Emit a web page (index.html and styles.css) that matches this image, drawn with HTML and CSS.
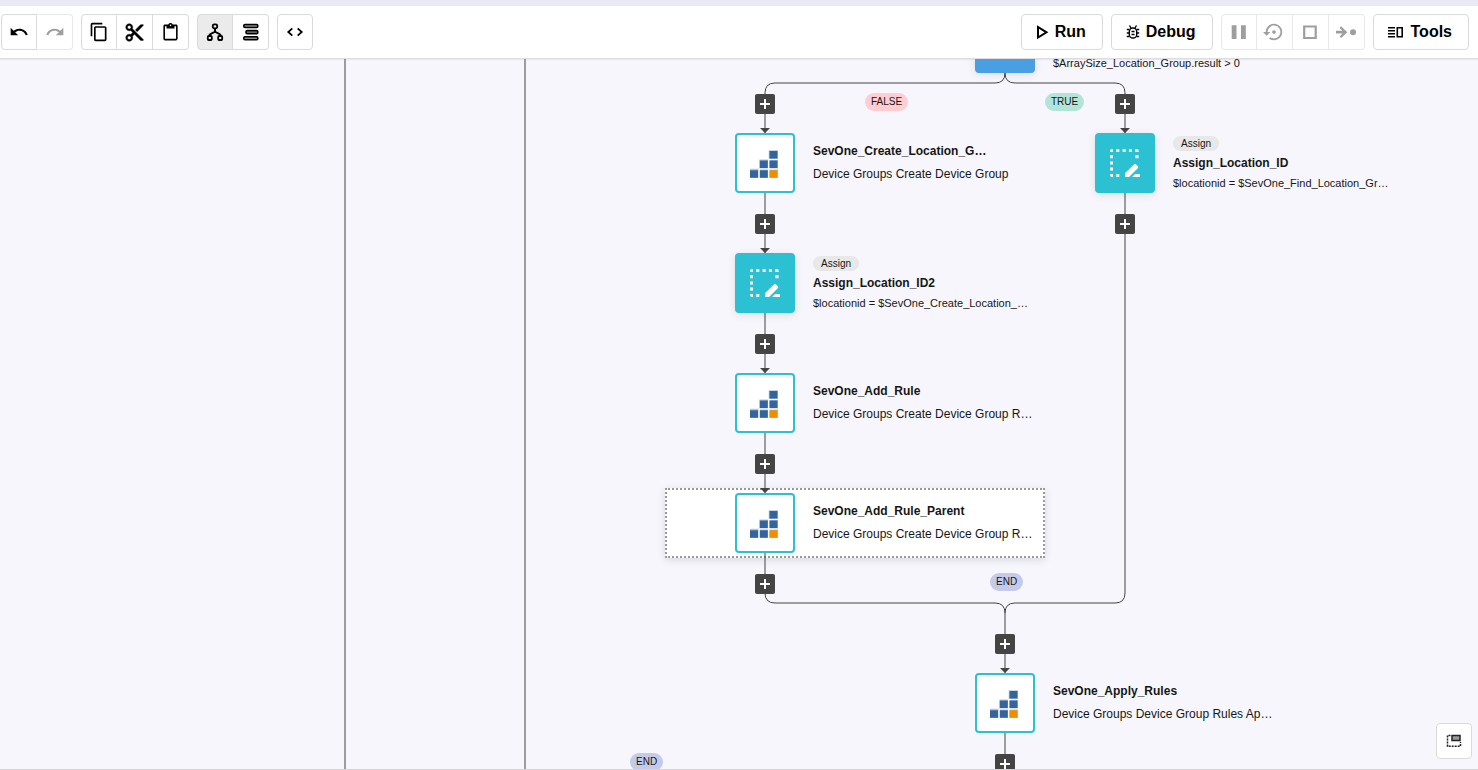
FILE: index.html
```html
<!DOCTYPE html>
<html lang="en">
<head>
<meta charset="utf-8">
<title>Workflow editor</title>
<link rel="stylesheet" href="styles.css">
</head>
<body>
<svg class="defs" aria-hidden="true">
  <symbol id="sevone" viewBox="0.500 -1 30 30">
    <path fill="#b9c7dc" d="M19.2 1.2h9.3v28h-28v-9.4h9.4v-9.4h9.3z"/>
    <path fill="#fff" d="M9 19.5h1.4v10H9zM18.6 10h1.4v19.500h-1.400zM19 9.900h10v1.200h-10zM9.500 19.400h20v1.200h-20z"/>
    <path fill="#33649b" d="M20 2h8v7.500h-8zM10.300 11.500h8v7.500h-8zM20 11.500h8v7.500h-8zM.500 21.200h8v7.500h-8zM10.300 21.200h8v7.500h-8z"/>
    <path fill="#f08c00" d="M20 21.200h8v7.500h-8z"/>
  </symbol>
  <symbol id="assign" viewBox="0 0 30 30">
    <path fill="#fff" d="M2 1h1v3H0V3a2 2 0 0 1 2-2zM6.300 1h3v3h-3zM12.600 1h3v3h-3zM18.900 1h3v3h-3zM25.200 1h1.500a2 2 0 0 1 2 2v1h-3.500zM25.400 7.200h3.200v3h-3.200zM0 7.200h3v3H0zM0 13.400h3v3H0zM0 19.600h3v3H0zM0 26h3v3H2a2 2 0 0 1-2-2zM6.300 26h3v3h-3z"/>
    <path fill="#fff" d="M15 25.200 24.200 16.200q.800-.700 1.600 0l2.200 2.200q.700.800 0 1.600L19 29h-4zM25 26h5v3h-8z"/>
  </symbol>
  <symbol id="plus" viewBox="0 0 20 20">
    <path fill="#fff" d="M9 5h2v4h4v2h-4v4H9v-4H5V9h4z"/>
  </symbol>
</svg>

<div class="app">
  <header class="toolbar">
    <div class="group">
      <button class="tool" aria-label="Undo"><svg width="20" height="20" viewBox="0 0 24 24"><path d="M12.500 8c-2.650 0-5.050.990-6.900 2.600L2 7v9h9l-3.620-3.620c1.390-1.160 3.160-1.880 5.120-1.880 3.540 0 6.550 2.310 7.600 5.500l2.370-.780C21.080 11.030 17.150 8 12.500 8z"/></svg></button>
      <button class="tool" aria-label="Redo" disabled><svg width="20" height="20" viewBox="0 0 24 24"><path d="M18.400 10.600C16.550 8.990 14.150 8 11.500 8c-4.650 0-8.580 3.030-9.960 7.220L3.900 16c1.050-3.190 4.050-5.500 7.600-5.500 1.950 0 3.730.720 5.120 1.880L13 16h9V7l-3.600 3.600z"/></svg></button>
    </div>
    <div class="group">
      <button class="tool" aria-label="Copy"><svg width="20" height="20" viewBox="0 0 24 24"><path d="M16 1H4c-1.100 0-2 .9-2 2v14h2V3h12V1zm3 4H8c-1.100 0-2 .9-2 2v14c0 1.100.9 2 2 2h11c1.100 0 2-.9 2-2V7c0-1.100-.9-2-2-2zm0 16H8V7h11v14z"/></svg></button>
      <button class="tool" aria-label="Cut"><svg width="21" height="21" viewBox="0 0 24 24"><path stroke="#000" stroke-width=".5" d="M9.640 7.640c.230-.500.360-1.050.360-1.640 0-2.210-1.790-4-4-4S2 3.790 2 6s1.790 4 4 4c.590 0 1.140-.130 1.640-.360L10 12l-2.360 2.360C7.140 14.130 6.590 14 6 14c-2.210 0-4 1.790-4 4s1.790 4 4 4 4-1.790 4-4c0-.590-.130-1.140-.360-1.640L12 14l7 7h3v-1L9.640 7.640zM6 8c-1.100 0-2-.890-2-2s.9-2 2-2 2 .890 2 2-.9 2-2 2zm0 12c-1.100 0-2-.890-2-2s.9-2 2-2 2 .890 2 2-.9 2-2 2zM19 3l-6 6 2 2 7-7V3z"/></svg></button>
      <button class="tool" aria-label="Paste"><svg width="19" height="19" viewBox="0 0 24 24"><path d="M19 2h-4.180C14.400.840 13.300 0 12 0S9.600.840 9.180 2H5c-1.100 0-2 .9-2 2v16c0 1.100.9 2 2 2h14c1.100 0 2-.9 2-2V4c0-1.100-.9-2-2-2zm-7 0c.550 0 1 .450 1 1s-.450 1-1 1-1-.450-1-1 .450-1 1-1zm7 18H5V4h2v3h10V4h2v16z"/></svg></button>
    </div>
    <div class="group">
      <button class="tool on" aria-label="Tree layout"><svg width="20" height="20" viewBox="0 0 20 20"><g fill="none" stroke="#000" stroke-width="1.800"><rect x="7.800" y="2.300" width="4.400" height="4" rx="1.500"/><rect x="2.800" y="14" width="4" height="4" rx="1"/><rect x="13.200" y="14" width="4" height="4" rx="1"/><path d="M10 6.300V10M4.800 14v-1.500L10 9.600l5.200 2.900V14" stroke-width="2"/></g></svg></button>
      <button class="tool" aria-label="List layout"><svg width="20" height="20" viewBox="0 0 20 20"><g fill="#888" stroke="#000" stroke-width="1.600"><rect x="2.800" y="2.500" width="14" height="3" rx="1.200"/><rect x="5" y="8.600" width="11.800" height="3" rx="1.200"/><rect x="2.800" y="14.700" width="14" height="3" rx="1.200"/></g></svg></button>
    </div>
    <div class="group">
      <button class="tool" aria-label="Code view"><svg width="20" height="20" viewBox="0 0 20 20"><path d="M7.300 6.300 3.300 10l4 3.700M12.700 6.300l4 3.700-4 3.700" fill="none" stroke="#000" stroke-width="1.800"/></svg></button>
    </div>

    <div class="group push">
      <button class="tool wide"><svg width="13" height="16" viewBox="0 0 13 16"><path d="M2 3v10.500l8.500-5.200z" fill="none" stroke="#000" stroke-width="2"/></svg>Run</button>
    </div>
    <div class="group">
      <button class="tool wide"><svg width="14" height="16" viewBox="0 0 14 16"><g fill="none" stroke="#000" stroke-width="1.400"><rect x="3.300" y="4" width="7.400" height="10" rx="3.600"/><path d="M5 4 3.500 1.500M9 4l1.500-2.500M.800 5.500H3.300M.800 9H3.300M.800 12.500H3.300M10.700 5.500h2.500M10.700 9h2.500M10.700 12.500h2.500M5.500 7.500h3M5.500 10.500h3"/></g></svg>Debug</button>
    </div>
    <div class="group">
      <button class="tool" aria-label="Pause" disabled><svg width="20" height="20" viewBox="0 0 20 20"><path d="M2.700 3.300h4.800v13.700H2.700zM12 3.300h4.800v13.700H12z"/></svg></button>
      <button class="tool" aria-label="Restart" disabled><svg width="22" height="22" viewBox="0 0 24 24"><path d="M14 12c0-1.100-.9-2-2-2s-2 .9-2 2 .9 2 2 2 2-.9 2-2zm-2-9c-4.970 0-9 4.030-9 9H0l4 4 4-4H5c0-3.870 3.130-7 7-7s7 3.130 7 7-3.130 7-7 7c-1.510 0-2.910-.490-4.060-1.300l-1.420 1.440C8.040 20.300 9.940 21 12 21c4.970 0 9-4.030 9-9s-4.030-9-9-9z"/></svg></button>
      <button class="tool" aria-label="Stop" disabled><svg width="20" height="20" viewBox="0 0 20 20"><path d="M4.200 4.500h11.500v11.500H4.200z" fill="none" stroke="#9e9e9e" stroke-width="2.200"/></svg></button>
      <button class="tool" aria-label="Step" disabled><svg width="22" height="20" viewBox="0 0 22 20"><path d="M1 8.800h6.500L4.600 5.900 6.100 4.300 12.300 10.200 6.100 16l-1.500-1.600L7.500 11.500H1z"/><circle cx="18" cy="10.200" r="3"/></svg></button>
    </div>
    <div class="group">
      <button class="tool wide"><svg width="17" height="16" viewBox="0 0 17 16"><path d="M0 3h7v1.500H0zM0 6h7v1.500H0zM0 9h7v1.500H0zM0 12h7v1.500H0z"/><path d="M9.300 3.800h4.900v8.900H9.300z" fill="none" stroke="#000" stroke-width="1.600"/></svg>Tools</button>
    </div>
  </header>

  <main class="canvas">
    <div class="selection"></div>

    <svg class="wires" aria-hidden="true">
      <g fill="none" stroke="#444">
        <path d="M345 0V720M525 0V720"/>
        <path d="M1005 14q0 10-10 10H775q-10 0-10 10V134M1005 14q0 10 10 10h100q10 0 10 10V134"/>
        <path d="M765 134V534q0 10 10 10H995q10 0 10 10V720"/>
        <path d="M1125 134V534q0 10-10 10H1015q-10 0-10 10"/>
      </g>
      <path fill="#444" d="M760 69h10l-5 5zM1120 69h10l-5 5zM760 189h10l-5 5zM760 309h10l-5 5zM760 429h10l-5 5zM1000 609h10l-5 5z"/>
    </svg>

    <div class="node decision" style="left:975px;top:-46px"></div>
    <span class="condition" style="left:1053px;top:0">$ArraySize_Location_Group.result &gt; 0</span>

    <span class="pill false" style="left:865px;top:34px">FALSE</span>
    <span class="pill true" style="left:1045px;top:34px">TRUE</span>
    <span class="pill end" style="left:990px;top:514px">END</span>
    <span class="pill end" style="left:630px;top:694px">END</span>

    <button class="add" aria-label="Add step" style="left:755px;top:35px"><svg><use href="#plus"/></svg></button>
    <button class="add" aria-label="Add step" style="left:1115px;top:35px"><svg><use href="#plus"/></svg></button>
    <button class="add" aria-label="Add step" style="left:755px;top:155px"><svg><use href="#plus"/></svg></button>
    <button class="add" aria-label="Add step" style="left:1115px;top:155px"><svg><use href="#plus"/></svg></button>
    <button class="add" aria-label="Add step" style="left:755px;top:275px"><svg><use href="#plus"/></svg></button>
    <button class="add" aria-label="Add step" style="left:755px;top:395px"><svg><use href="#plus"/></svg></button>
    <button class="add" aria-label="Add step" style="left:755px;top:515px"><svg><use href="#plus"/></svg></button>
    <button class="add" aria-label="Add step" style="left:995px;top:575px"><svg><use href="#plus"/></svg></button>
    <button class="add" aria-label="Add step" style="left:995px;top:695px"><svg><use href="#plus"/></svg></button>

    <div class="node action" style="left:735px;top:74px"><svg><use href="#sevone"/></svg></div>
    <div class="info" style="left:813px;top:74px">
      <strong class="name">SevOne_Create_Location_G…</strong>
      <span class="desc">Device Groups Create Device Group</span>
    </div>

    <div class="node assign" style="left:1095px;top:74px"><svg><use href="#assign"/></svg></div>
    <div class="info tagged" style="left:1173px;top:74px">
      <span class="tag">Assign</span>
      <strong class="name">Assign_Location_ID</strong>
      <span class="expr">$locationid = $SevOne_Find_Location_Gr…</span>
    </div>

    <div class="node assign" style="left:735px;top:194px"><svg><use href="#assign"/></svg></div>
    <div class="info tagged" style="left:813px;top:194px">
      <span class="tag">Assign</span>
      <strong class="name">Assign_Location_ID2</strong>
      <span class="expr">$locationid = $SevOne_Create_Location_…</span>
    </div>

    <div class="node action" style="left:735px;top:314px"><svg><use href="#sevone"/></svg></div>
    <div class="info" style="left:813px;top:314px">
      <strong class="name">SevOne_Add_Rule</strong>
      <span class="desc">Device Groups Create Device Group R…</span>
    </div>

    <div class="node action" style="left:735px;top:434px"><svg><use href="#sevone"/></svg></div>
    <div class="info" style="left:813px;top:434px">
      <strong class="name">SevOne_Add_Rule_Parent</strong>
      <span class="desc">Device Groups Create Device Group R…</span>
    </div>

    <div class="node action" style="left:975px;top:614px"><svg><use href="#sevone"/></svg></div>
    <div class="info" style="left:1053px;top:614px">
      <strong class="name">SevOne_Apply_Rules</strong>
      <span class="desc">Device Groups Device Group Rules Ap…</span>
    </div>

    <button class="tool minimap" aria-label="Toggle minimap"><svg width="16" height="16" viewBox="0 0 16 16"><path d="M6 2.500h8v5H6z" fill="#999" stroke="#222" stroke-width="1.500"/><path d="M4.500 2.500H1.500v10.800h13V9" fill="none" stroke="#222" stroke-width="1.500" stroke-dasharray="2 1"/></svg></button>
  </main>
</div>
</body>
</html>
```
FILE: styles.css
```css
* {
  box-sizing: border-box;
}

body {
  margin: 0;
  font-family: "Liberation Sans", Arial, sans-serif;
  font-size: 12px;
  color: #161616;
}

.defs {
  position: absolute;
  width: 0;
  height: 0;
}

.app {
  display: flex;
  flex-direction: column;
  height: 100vh;
  border-top: 6px solid #e8eaf6;
  background: #f6f6fc;
}

/* Toolbar */

.toolbar {
  display: flex;
  gap: 8px;
  padding: 8px 9px 8px 1px;
  background: #fff;
  border-bottom: 1px solid #dedee2;
  box-shadow: 0 1px 1px rgba(0, 0, 0, 0.06);
}

.group {
  display: flex;
}

.push {
  margin-left: auto;
}

.tool {
  display: flex;
  align-items: center;
  justify-content: center;
  width: 36px;
  height: 36px;
  padding: 0;
  border: 1px solid #dadada;
  background: #fff;
  color: #000;
  font: bold 16px "Liberation Sans", Arial, sans-serif;
}

.tool svg {
  flex: none;
}

.tool + .tool {
  border-left-width: 0;
}

.tool:first-child {
  border-top-left-radius: 4px;
  border-bottom-left-radius: 4px;
}

.tool:last-child {
  border-top-right-radius: 4px;
  border-bottom-right-radius: 4px;
}

.tool:disabled {
  border-color: #e8e8e8;
}

.tool:disabled svg {
  fill: #9e9e9e;
}

.tool.on {
  background: #ebebeb;
}

.tool.wide {
  width: auto;
  gap: 6px;
  padding: 0 16px 0 14px;
}

/* Canvas */

.canvas {
  position: relative;
  flex: 1;
  overflow: hidden;
  border-bottom: 1px solid #d5d5d9;
}

.wires {
  position: absolute;
  inset: 0;
  width: 100%;
  height: 100%;
}

.selection {
  position: absolute;
  left: 665px;
  top: 429px;
  width: 380px;
  height: 70px;
  border: 2px dotted #999;
  background: #fff;
  box-shadow: 0 2px 8px rgba(0, 0, 0, 0.12);
}

.node {
  position: absolute;
  display: grid;
  place-items: center;
  width: 60px;
  height: 60px;
  border-radius: 4px;
  box-shadow: 0 2px 8px rgba(0, 0, 0, 0.1);
}

.node svg {
  width: 30px;
  height: 30px;
}

.decision {
  background: #4a9fe3;
}

.assign {
  background: #2bc1d3;
}

.action {
  border: 2px solid #2bc1d3;
  background: #fff;
  box-shadow: none;
}

.info {
  position: absolute;
  display: flex;
  flex-direction: column;
  align-items: flex-start;
  height: 60px;
  padding-top: 10px;
  white-space: nowrap;
}

.info.tagged {
  padding-top: 3px;
}

.name {
  line-height: 16px;
}

.desc {
  margin-top: 7px;
  line-height: 16px;
}

.expr {
  margin-top: 6px;
  font-size: 11px;
  line-height: 13px;
}

.condition {
  position: absolute;
  font-size: 11px;
  line-height: 8px;
  white-space: nowrap;
}

.tag {
  margin-bottom: 4px;
  padding: 0 8px;
  border-radius: 8px;
  background: #e8e8e8;
  font-size: 10px;
  line-height: 15px;
}

.pill {
  position: absolute;
  padding: 0 6px;
  border-radius: 9px;
  font-size: 10px;
  line-height: 18px;
}

.false {
  background: #ffcdd2;
}

.true {
  background: #b2e5d8;
}

.end {
  background: #c5cae9;
}

.add {
  position: absolute;
  width: 20px;
  height: 20px;
  padding: 0;
  border: 0;
  border-radius: 2px;
  background: #444;
}

.add svg {
  display: block;
  width: 20px;
  height: 20px;
}

.minimap {
  position: absolute;
  right: 6px;
  bottom: 10px;
  border-radius: 4px;
}
```
